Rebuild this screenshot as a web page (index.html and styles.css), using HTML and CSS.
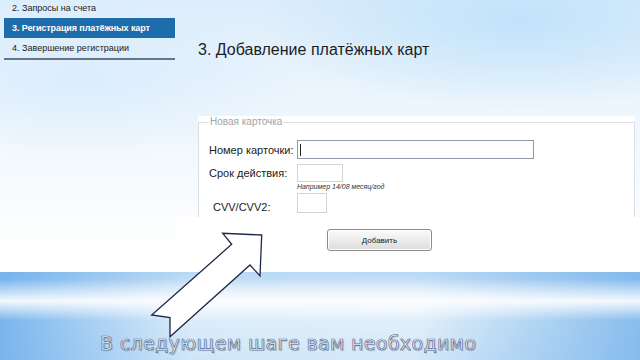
FILE: index.html
```html
<!DOCTYPE html>
<html lang="ru">
<head>
    <meta charset="UTF-8">
    <title>Регистрация платёжных карт</title>
    <link rel="stylesheet" href="styles.css">
</head>
<body>
    <div class="screen">
        <!-- Steps menu -->
        <ul class="steps">
            <li class="step">2. Запросы на счета</li>
            <li class="step active">3. Регистрация платёжных карт</li>
            <li class="step">4. Завершение регистрации</li>
        </ul>

        <div class="main">
            <h1>3. Добавление платёжных карт</h1>

            <div class="form">
                <fieldset>
                    <legend>Новая карточка</legend>
                    <div class="row">
                        <label class="label">Номер карточки:</label>
                        <span class="field">
                            <input class="input input-number" type="text">
                            <span class="caret"></span>
                        </span>
                    </div>
                    <div class="row row-date">
                        <label class="label">Срок действия:</label>
                        <input class="input input-date" type="text">
                    </div>
                    <div class="hint">Например 14/08 месяц/год</div>
                    <div class="row row-cvv">
                        <label class="label label-cvv">CVV/CVV2:</label>
                        <input class="input input-cvv" type="text">
                    </div>
                </fieldset>
            </div>

            <div class="actions">
                <button class="button" type="button">Добавить</button>
            </div>
        </div>
    </div>

    <div class="caption">В следующем шаге вам необходимо</div>

    <!-- Annotation arrow drawn over the slide -->
    <svg class="arrow" width="640" height="360" viewBox="0 0 640 360">
        <polygon points="261.7,235 222.7,233.3 231.7,244.3 151.7,315 170,317.5 170,336.7 250,265 260,276"
                 fill="#ffffff" stroke="#1e2847" stroke-width="1.3" stroke-linejoin="miter"/>
    </svg>
</body>
</html>
```

FILE: styles.css
```css
body {
    margin: 0;
    width: 640px;
    height: 360px;
    overflow: hidden;
    position: relative;
    font-family: "Liberation Sans", Arial, sans-serif;
    color: #222;
    background:
        radial-gradient(ellipse 260px 90px at 520px 20px, rgba(190, 225, 250, 0.9), rgba(190, 225, 250, 0)),
        radial-gradient(ellipse 220px 80px at 80px 80px, rgba(215, 235, 252, 0.8), rgba(215, 235, 252, 0)),
        linear-gradient(180deg, #dcedfb 0%, #eef6fd 30%, #f8fbfe 55%, #ffffff 70%);
}

.screen {
    display: flex;
    height: 272px;
}

/* Steps menu */
.steps {
    list-style: none;
    margin: -2px 0 0 4px;
    padding: 0;
    width: 171px;
    height: 62px;
    border-bottom: 2px solid #66768a;
    box-sizing: border-box;
}

.step {
    height: 20px;
    line-height: 20px;
    padding-left: 8px;
    font-size: 9px;
    color: #222;
}

.step.active {
    background-color: #1d6cab;
    color: #fff;
    font-weight: bold;
    letter-spacing: -0.1px;
}

.main {
    flex: 1;
    display: flex;
    flex-direction: column;
}

h1 {
    margin: 0;
    padding: 40px 0 0 23px;
    height: 20px;
    line-height: 20px;
    font-size: 16px;
    font-weight: normal;
    color: #1e1e1e;
}

.form {
    margin: 56px 0 0 23px;
    width: 437px;
    background-color: #fff;
}

fieldset {
    margin: 0;
    padding: 0 0 4px 10px;
    border: 1px solid #d9dee4;
    border-bottom: none;
}

legend {
    padding: 0 1px;
    font-size: 10px;
    line-height: 12px;
    color: #a0a4a8;
}

.row {
    display: flex;
    align-items: center;
    margin-top: 12px;
}

.row-date {
    margin-top: 5px;
}

.row-cvv {
    margin-top: 2px;
}

.label {
    width: 88px;
    font-size: 11px;
    color: #222;
}

.label-cvv {
    padding: 8px 0 0 4px;
    width: 84px;
    font-size: 11px;
}

.field {
    position: relative;
    display: block;
}

.input {
    display: block;
    margin: 0;
    padding: 0;
    box-sizing: border-box;
    background-color: #fff;
    border: 1px solid #d3d3d3;
}

.input-number {
    width: 237px;
    height: 19px;
    border-color: #8f9aa6;
}

.caret {
    position: absolute;
    left: 3px;
    top: 4px;
    width: 1px;
    height: 12px;
    background-color: #222;
}

.input-date {
    width: 46px;
    height: 18px;
}

.input-cvv {
    width: 30px;
    height: 20px;
}

.hint {
    margin: 1px 0 0 88px;
    height: 8px;
    line-height: 8px;
    font-size: 7px;
    font-style: italic;
    color: #333;
}

.actions {
    flex: 1;
    padding: 12px 0 0 152px;
    box-sizing: border-box;
    background-color: #fff;
}

.button {
    display: block;
    width: 105px;
    height: 22px;
    padding: 0;
    font-family: "Liberation Sans", Arial, sans-serif;
    font-size: 8px;
    color: #222;
    border: 1px solid #8c8c8c;
    border-radius: 3px;
    background: linear-gradient(180deg, #fbfbfb 0%, #ececec 50%, #dcdcdc 100%);
    box-shadow: inset 0 0 0 1px #fff;
}

/* Bottom band with caption */
.caption {
    height: 88px;
    box-sizing: border-box;
    padding: 60px 0 0 100px;
    font-family: "DejaVu Sans", sans-serif;
    font-size: 19px;
    line-height: 22px;
    letter-spacing: 0.35px;
    color: #f2f6fc;
    -webkit-text-stroke: 0.7px #5f6f90;
    text-shadow: 1px 1px 1px rgba(40, 60, 90, 0.3);
    background:
        linear-gradient(180deg, rgba(255, 255, 255, 0) 8%, rgba(255, 255, 255, 0.9) 33%, rgba(255, 255, 255, 0) 55%),
        linear-gradient(90deg, rgba(110, 175, 235, 0.9) 0%, rgba(200, 226, 248, 0.2) 30%, rgba(230, 242, 252, 0.1) 65%, rgba(120, 180, 235, 0.85) 100%),
        linear-gradient(180deg, #b4d6f3 0%, #e6f2fb 40%, #d2e7f8 100%);
}

.arrow {
    position: absolute;
    left: 0;
    top: 0;
    pointer-events: none;
}
```
